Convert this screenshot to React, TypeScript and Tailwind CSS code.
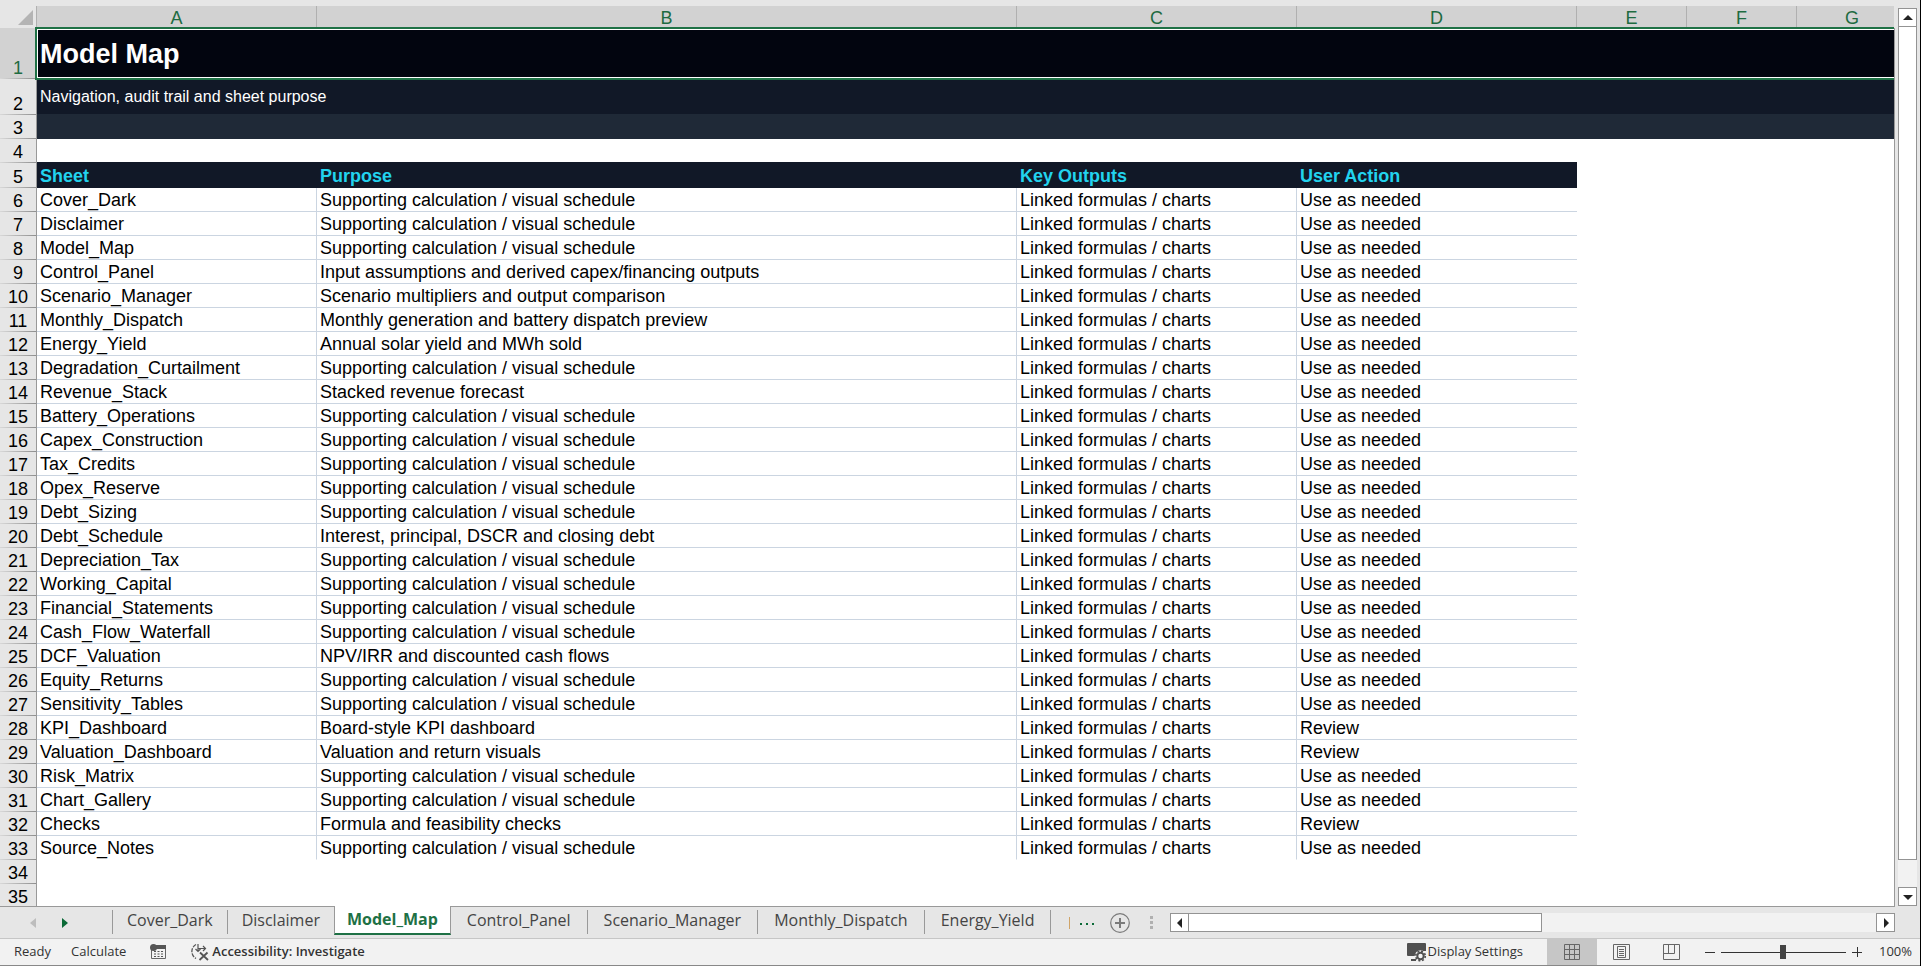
import { ReactNode } from "react";

const SUPPORTING = "Supporting calculation / visual schedule";

const sheets: [string, string, string][] = [
    ["Cover_Dark", SUPPORTING, "Use as needed"],
    ["Disclaimer", SUPPORTING, "Use as needed"],
    ["Model_Map", SUPPORTING, "Use as needed"],
    ["Control_Panel", "Input assumptions and derived capex/financing outputs", "Use as needed"],
    ["Scenario_Manager", "Scenario multipliers and output comparison", "Use as needed"],
    ["Monthly_Dispatch", "Monthly generation and battery dispatch preview", "Use as needed"],
    ["Energy_Yield", "Annual solar yield and MWh sold", "Use as needed"],
    ["Degradation_Curtailment", SUPPORTING, "Use as needed"],
    ["Revenue_Stack", "Stacked revenue forecast", "Use as needed"],
    ["Battery_Operations", SUPPORTING, "Use as needed"],
    ["Capex_Construction", SUPPORTING, "Use as needed"],
    ["Tax_Credits", SUPPORTING, "Use as needed"],
    ["Opex_Reserve", SUPPORTING, "Use as needed"],
    ["Debt_Sizing", SUPPORTING, "Use as needed"],
    ["Debt_Schedule", "Interest, principal, DSCR and closing debt", "Use as needed"],
    ["Depreciation_Tax", SUPPORTING, "Use as needed"],
    ["Working_Capital", SUPPORTING, "Use as needed"],
    ["Financial_Statements", SUPPORTING, "Use as needed"],
    ["Cash_Flow_Waterfall", SUPPORTING, "Use as needed"],
    ["DCF_Valuation", "NPV/IRR and discounted cash flows", "Use as needed"],
    ["Equity_Returns", SUPPORTING, "Use as needed"],
    ["Sensitivity_Tables", SUPPORTING, "Use as needed"],
    ["KPI_Dashboard", "Board-style KPI dashboard", "Review"],
    ["Valuation_Dashboard", "Valuation and return visuals", "Review"],
    ["Risk_Matrix", SUPPORTING, "Use as needed"],
    ["Chart_Gallery", SUPPORTING, "Use as needed"],
    ["Checks", "Formula and feasibility checks", "Review"],
    ["Source_Notes", SUPPORTING, "Use as needed"],
];

const tabs = ["Cover_Dark", "Disclaimer", "Model_Map", "Control_Panel", "Scenario_Manager", "Monthly_Dispatch", "Energy_Yield"];

function RowHeader({ n, selected = false }: { n: number; selected?: boolean }) {
    return (
        <th
            scope="row"
            className={`border-r border-[#999] bg-[linear-gradient(to_right,#d8d8d8,#8f8f8f)] bg-[length:100%_1px] bg-bottom bg-no-repeat p-0 pb-px text-center align-bottom font-normal leading-5 ${
                selected ? "bg-[#d2d2d2] text-[#1e6b41]" : "bg-[#e6e6e6] text-black"
            }`}
        >
            {n}
        </th>
    );
}

function ColumnHeader({ children }: { children: ReactNode }) {
    return (
        <th scope="col" className="border-r border-[#b0b0b0] bg-[#d2d2d2] p-0 pt-0.5 font-normal leading-5 text-[#1e6b41]">
            {children}
        </th>
    );
}

function ScrollButton({ label, path }: { label: string; path: string }) {
    return (
        <button aria-label={label} className="flex size-[19px] shrink-0 items-center justify-center border border-[#939393] bg-white">
            <svg viewBox="0 0 10 10" className="size-[10px] fill-[#222]">
                <path d={path} />
            </svg>
        </button>
    );
}

function Grid() {
    return (
        <div className="min-w-0 flex-1 overflow-hidden bg-white">
            <table className="w-full table-fixed border-separate border-spacing-0 font-['Liberation_Sans',Arial,sans-serif] text-[18px] text-black">
                <colgroup>
                    <col className="w-[37px]" />
                    <col className="w-[280px]" />
                    <col className="w-[700px]" />
                    <col className="w-[280px]" />
                    <col className="w-[280px]" />
                    <col className="w-[110px]" />
                    <col className="w-[110px]" />
                    <col />
                </colgroup>
                <thead>
                    <tr className="h-[22px]">
                        <td className="border-r border-[#b0b0b0] bg-[#e6e6e6] p-0">
                            <svg viewBox="0 0 15 15" className="ml-auto mr-[3px] size-[15px] fill-[#b4b4b4]">
                                <path d="M15 0V15H0Z" />
                            </svg>
                        </td>
                        <ColumnHeader>A</ColumnHeader>
                        <ColumnHeader>B</ColumnHeader>
                        <ColumnHeader>C</ColumnHeader>
                        <ColumnHeader>D</ColumnHeader>
                        <ColumnHeader>E</ColumnHeader>
                        <ColumnHeader>F</ColumnHeader>
                        <th scope="col" className="bg-[#d2d2d2] p-0 pt-0.5 font-normal leading-5 text-[#1e6b41]">
                            <div className="w-[110px] text-center">G</div>
                        </th>
                    </tr>
                </thead>
                <tbody>
                    <tr className="h-[51px]">
                        <RowHeader n={1} selected />
                        <td colSpan={7} className="relative bg-[#02050f] p-0 pl-[3px] text-[27px] font-bold leading-[30px] text-white">
                            Model Map
                            {/* Selection outline */}
                            <div className="pointer-events-none absolute -bottom-px -left-0.5 -right-2 -top-px z-10 border-2 border-[#1e7145]">
                                <div className="h-full border border-white" />
                            </div>
                        </td>
                    </tr>
                    <tr className="h-9">
                        <RowHeader n={2} />
                        <td colSpan={7} className="border-b border-[#1f2937] bg-[#111827] p-0 pl-[3px] text-[16px] leading-5 text-white">
                            Navigation, audit trail and sheet purpose
                        </td>
                    </tr>
                    <tr className="h-6">
                        <RowHeader n={3} />
                        <td colSpan={7} className="bg-[#1f2937] p-0" />
                    </tr>
                    <tr className="h-6">
                        <RowHeader n={4} />
                        <td colSpan={4} className="border-b border-[#111827] p-0" />
                        <td colSpan={3} className="p-0" />
                    </tr>
                    <tr className="h-[25px] text-left leading-5 text-[#22d3ee]">
                        <RowHeader n={5} />
                        {["Sheet", "Purpose", "Key Outputs", "User Action"].map((h) => (
                            <th key={h} scope="col" className="bg-[#111827] p-0 pb-0.5 pl-[3px] align-bottom font-bold">
                                {h}
                            </th>
                        ))}
                        <td colSpan={3} className="p-0" />
                    </tr>
                    {sheets.map(([name, purpose, action], i) => {
                        const line = i === sheets.length - 1 ? "border-b border-b-white" : "border-b border-b-[#cbd5e1]";
                        return (
                            <tr key={name} className="h-6 leading-5">
                                <RowHeader n={i + 6} />
                                <td className={`border-r border-r-[#cbd5e1] p-0 pb-px pl-[3px] align-bottom ${line}`}>{name}</td>
                                <td className={`border-r border-r-[#cbd5e1] p-0 pb-px pl-[3px] align-bottom ${line}`}>{purpose}</td>
                                <td className={`border-r border-r-[#cbd5e1] p-0 pb-px pl-[3px] align-bottom ${line}`}>Linked formulas / charts</td>
                                <td className={`p-0 pb-px pl-[3px] align-bottom ${line}`}>{action}</td>
                                <td colSpan={3} className="p-0" />
                            </tr>
                        );
                    })}
                    {[34, 35].map((n) => (
                        <tr key={n} className="h-6">
                            <RowHeader n={n} />
                            <td colSpan={7} className="p-0" />
                        </tr>
                    ))}
                </tbody>
            </table>
        </div>
    );
}

function SheetTabs() {
    return (
        <div className="flex h-[33px] shrink-0 items-start border-b border-[#c6c6c6] bg-[#e6e6e6] pr-[25px] font-['Open_Sans',sans-serif] text-[16px] text-[#444]">
            <div className="flex h-8 w-[112px] shrink-0 items-center gap-[26px] border-t border-[#999] pl-[30px]">
                <button aria-label="Previous sheet">
                    <svg viewBox="0 0 6 10" className="h-[10px] w-[6px] fill-[#bdbdbd]">
                        <path d="M6 0V10L0 5Z" />
                    </svg>
                </button>
                <button aria-label="Next sheet">
                    <svg viewBox="0 0 6 10" className="h-[10px] w-[6px] fill-[#0b6a37]">
                        <path d="M0 0V10L6 5Z" />
                    </svg>
                </button>
            </div>
            {tabs.map((tab, i) =>
                tab === "Model_Map" ? (
                    <button key={tab} className="h-[29px] border-x border-b-2 border-x-[#999] border-b-[#1e7145] bg-white px-3 font-bold leading-[27px] text-[#1e7145]">
                        {tab}
                    </button>
                ) : (
                    <div key={tab} className="flex items-start border-t border-[#999] pt-[3px]">
                        {i === 0 && <div className="h-6 w-px bg-[#999]" />}
                        <button className={i < 3 ? "px-[14px] leading-5" : "px-4 leading-5"}>{tab}</button>
                        {tab !== "Disclaimer" && <div className="h-6 w-px bg-[#999]" />}
                    </div>
                )
            )}
            <div className="flex h-8 min-w-0 flex-1 items-center border-t border-[#999]">
                <div className="ml-[18px] h-3 w-px bg-[#d0a468]" />
                <button aria-label="More sheets" className="ml-[10px] flex gap-1 pt-[3px]">
                    <span className="size-0.5 bg-[#0b6a37]" />
                    <span className="size-0.5 bg-[#0b6a37]" />
                    <span className="size-0.5 bg-[#0b6a37]" />
                </button>
                <button aria-label="New sheet" className="ml-4">
                    <svg viewBox="0 0 20 20" className="size-5 fill-none stroke-[#7a7a7a]">
                        <circle cx="10" cy="10" r="9.3" strokeWidth="1.2" />
                        <path d="M10 5V15M5 10H15" strokeWidth="2" />
                    </svg>
                </button>
                <div className="ml-5 flex flex-col gap-0.5">
                    <span className="size-[3px] bg-[#b0b0b0]" />
                    <span className="size-[3px] bg-[#b0b0b0]" />
                    <span className="size-[3px] bg-[#b0b0b0]" />
                </div>
                <div className="ml-[17px] flex flex-1 bg-[#f2f2f2]">
                    <ScrollButton label="Scroll left" path="M7 0V10L2 5Z" />
                    <div className="flex flex-1">
                        <div className="-ml-px h-[19px] w-[354px] border border-[#939393] bg-white" />
                    </div>
                    <ScrollButton label="Scroll right" path="M3 0V10L8 5Z" />
                </div>
            </div>
        </div>
    );
}

function StatusBar() {
    return (
        <div className="flex h-[27px] shrink-0 items-center border-b border-[#888] bg-[#f2f2f2] pl-[14px] pr-2 font-['Open_Sans',sans-serif] text-[13px] text-[#333]">
            <span>Ready</span>
            <span className="ml-5">Calculate</span>
            <button aria-label="Record macro" className="ml-6">
                <svg viewBox="0 0 16 16" className="size-4">
                    <path d="M1.5 4V14.5H15.5V1.5H6" fill="none" stroke="#666" />
                    <path d="M6 1H16V5H6Z" fill="#555" />
                    <circle cx="3.500" cy="3.500" r="3.500" fill="#555" />
                    <path d="M4 7.500H6M7.500 7.500H9.500M11 7.500H13M4 10H6M7.500 10H9.500M11 10H13M4 12.500H6M7.500 12.500H9.500M11 12.500H13" stroke="#555" />
                </svg>
            </button>
            <button className="ml-6 flex items-center gap-[3px] font-semibold">
                <svg viewBox="0 0 19 18" className="h-[18px] w-[19px] fill-none stroke-[#555]">
                    <path d="M6 1.500A8 8 0 0 0 6 15.500" strokeWidth="1.300" strokeDasharray="4 1.200" />
                    <path d="M8 1V8.500M5.500 6L8 8.500L10.500 6M8 5.500H15.500M13 3L15.500 5.500L13 8" strokeWidth="1.200" />
                    <path d="M10 9.500L18 17M17.500 9.500L9.500 17" strokeWidth="1.800" />
                </svg>
                Accessibility: Investigate
            </button>
            <button className="ml-auto flex items-center">
                <svg viewBox="0 0 20 19" className="h-[19px] w-5">
                    <path d="M1 0H18Q19 0 19 1V8H12L8 13H1Q0 13 0 12V1Q0 0 1 0ZM4 16H9V18H4Z" fill="#505050" />
                    <circle cx="13.500" cy="13" r="4.800" fill="#f2f2f2" stroke="#f2f2f2" strokeWidth="2" />
                    <circle cx="13.500" cy="13" r="3.200" fill="none" stroke="#505050" strokeWidth="2" />
                    <circle cx="13.500" cy="13" r="4.800" fill="none" stroke="#505050" strokeWidth="1.600" strokeDasharray="2 1.770" />
                </svg>
                Display Settings
            </button>
            <button aria-label="Normal view" className="ml-6 flex h-[26px] w-[50px] items-center justify-center bg-[#c6c6c6]">
                <svg viewBox="0 0 16 16" className="size-4 fill-none stroke-[#666]">
                    <path d="M.5 .5H15.500V15.500H.5ZM5.500 .5V15.500M10.500 .5V15.500M.5 5.500H15.500M.5 10.500H15.500" />
                </svg>
            </button>
            <button aria-label="Page layout view" className="flex h-[26px] w-[50px] items-center justify-center">
                <svg viewBox="0 0 17 16" className="h-4 w-[17px] fill-none stroke-[#666]">
                    <path d="M.5 .5H16.500V15.500H.5ZM4.500 2.500H12.500V13.500H4.500ZM6 5.500H11M6 7.500H11M6 9.500H11M6 11.500H11" />
                </svg>
            </button>
            <button aria-label="Page break preview" className="flex h-[26px] w-[50px] items-center justify-center">
                <svg viewBox="0 0 17 16" className="h-4 w-[17px] fill-none stroke-[#666]">
                    <path d="M.5 .5H16.500V15.500H.5ZM.5 9.500H11.500V.5M5.500 .5V9.500" />
                </svg>
            </button>
            <button aria-label="Zoom out" className="ml-2">
                <svg viewBox="0 0 10 10" className="size-[10px] stroke-[#333]">
                    <path d="M0 5.500H10" />
                </svg>
            </button>
            <input
                type="range"
                aria-label="Zoom"
                min={10}
                max={190}
                defaultValue={100}
                className="mx-[6px] h-4 w-[125px] appearance-none bg-[linear-gradient(#333,#333)] bg-[length:100%_1px] bg-center bg-no-repeat [&::-webkit-slider-thumb]:h-[14px] [&::-webkit-slider-thumb]:w-[6px] [&::-webkit-slider-thumb]:appearance-none [&::-webkit-slider-thumb]:bg-[#444]"
            />
            <button aria-label="Zoom in">
                <svg viewBox="0 0 10 10" className="size-[10px] stroke-[#333]">
                    <path d="M0 5.500H10M5.500 0V10" />
                </svg>
            </button>
            <span className="ml-[17px]">100%</span>
        </div>
    );
}

export default function App() {
    return (
        <div className="flex h-screen flex-col overflow-hidden border-r border-black bg-[#e6e6e6]">
            <div className="flex min-h-0 flex-1">
                <div className="flex min-w-0 flex-1 pt-[6px]">
                    <Grid />
                    <div className="mt-[22px] w-px bg-[#999]" />
                </div>
                <div className="mx-[3px] mt-2 flex flex-col bg-[#f2f2f2]">
                    <ScrollButton label="Scroll up" path="M0 7H10L5 2Z" />
                    <div className="flex-1">
                        <div className="-mt-px h-[97%] w-[19px] border border-[#939393] bg-white" />
                    </div>
                    <ScrollButton label="Scroll down" path="M0 3H10L5 8Z" />
                </div>
            </div>
            <SheetTabs />
            <StatusBar />
        </div>
    );
}
